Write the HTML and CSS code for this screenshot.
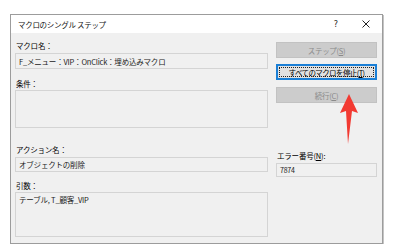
FILE: index.html
```html
<!DOCTYPE html>
<html lang="ja">
<head>
<meta charset="utf-8">
<link rel="stylesheet" href="styles.css">
</head>
<body>
<div class="dialog">
  <div class="titlebar">
    <span class="title">マクロのシングル ステップ</span>
    <span class="help">?</span>
    <svg class="close" width="8" height="8" viewBox="0 0 8 8"><path d="M0.5 0.5L7.5 7.5M7.5 0.5L0.5 7.5" stroke="#222" stroke-width="1"/></svg>
  </div>
  <div class="content">
    <div class="left">
      <div class="label l1">マクロ名：</div>
      <div class="field f1">F_メニュー：VIP：OnClick：埋め込みマクロ</div>
      <div class="label l2">条件：</div>
      <div class="box b1"></div>
      <div class="label l3">アクション名：</div>
      <div class="field f2">オブジェクトの削除</div>
      <div class="label l4">引数：</div>
      <div class="box b2">テーブル, T_顧客_VIP</div>
    </div>
    <div class="right">
      <div class="btn disabled s1">ステップ(<u>S</u>)</div>
      <div class="btn focus s2"><span class="inner">すべてのマクロを停止(<u>T</u>)</span></div>
      <div class="btn disabled s3">続行(<u>C</u>)</div>
      <div class="label l5">エラー番号(<u>N</u>):</div>
      <div class="field f3">7874</div>
    </div>
  </div>
  <svg class="arrow" width="20" height="52" viewBox="0 0 20 52"><polygon points="10,0 19,19 13,17 9,50 7,17 1,19" fill="#f23a32"/></svg>
</div>
</body>
</html>
```

FILE: styles.css
```css
html, body {
  margin: 0;
  padding: 0;
  background: #ffffff;
}
body {
  font-family: "Noto Sans CJK JP", "Noto Sans", sans-serif;
  font-size: 7.5px;
  color: #000;
}
.dialog {
  position: relative;
  margin: 14px 0 0 10px;
  width: 373px;
  height: 230px;
  box-sizing: border-box;
  border: 1px solid #9c9c9c;
  box-shadow: 1px 1px 0 #c4c4c4;
  background: #f0f0f0;
  display: flex;
  flex-direction: column;
}
.titlebar {
  height: 18px;
  background: #ffffff;
  display: flex;
  align-items: center;
  padding-left: 7px;
}
.title {
  flex: 1;
  letter-spacing: -0.3px;
  color: #111;
}
.help {
  font-family: "DejaVu Sans", sans-serif;
  font-size: 8px;
  color: #222;
  margin-right: 24px;
}
.close {
  margin-right: 12px;
}
.content {
  display: flex;
  padding: 0 5px 0 4px;
  gap: 8px;
}
.left {
  width: 253px;
  display: flex;
  flex-direction: column;
}
.right {
  width: 101px;
  display: flex;
  flex-direction: column;
}
.label {
  height: 10px;
  line-height: 10px;
  padding-left: 1px;
  letter-spacing: -0.2px;
}
.field, .box {
  box-sizing: border-box;
  border: 1px solid #d4d4d4;
  background: #f0f0f0;
  color: #222;
  padding-left: 3px;
  letter-spacing: -0.2px;
}
.field {
  display: flex;
  align-items: center;
}
.l1 { margin-top: 8px; }
.f1 { margin-top: 2px; height: 16px; }
.l2 { margin-top: 10px; }
.b1 { margin-top: 1px; height: 38px; }
.l3 { margin-top: 17px; }
.f2 { margin-top: 2px; height: 15px; }
.l4 { margin-top: 9px; }
.b2 { margin-top: 1px; height: 45px; padding-top: 2px; line-height: 10px; }

.btn {
  box-sizing: border-box;
  height: 16px;
  display: flex;
  align-items: center;
  justify-content: center;
  letter-spacing: -0.3px;
}
.disabled {
  background: #cccccc;
  border: 1px solid #c2c2c2;
  color: #8a8a8a;
}
.focus {
  background: #e1e1e1;
  border: 2px solid #1a7fd6;
  padding: 1px;
  color: #000;
  letter-spacing: -0.6px;
}
.focus .inner {
  flex: 1;
  align-self: stretch;
  border: 1px dotted #222;
  display: flex;
  align-items: center;
  justify-content: center;
}
.s1 { margin-top: 9px; }
.s2 { margin-top: 6px; }
.s3 { margin-top: 7px; }
.l5 { margin-top: 48px; }
.f3 { margin-top: 2px; height: 14px; font-size: 7px; }
u { text-decoration: underline; text-underline-offset: 1px; }

.arrow {
  position: absolute;
  left: 328px;
  top: 79px;
}
```
